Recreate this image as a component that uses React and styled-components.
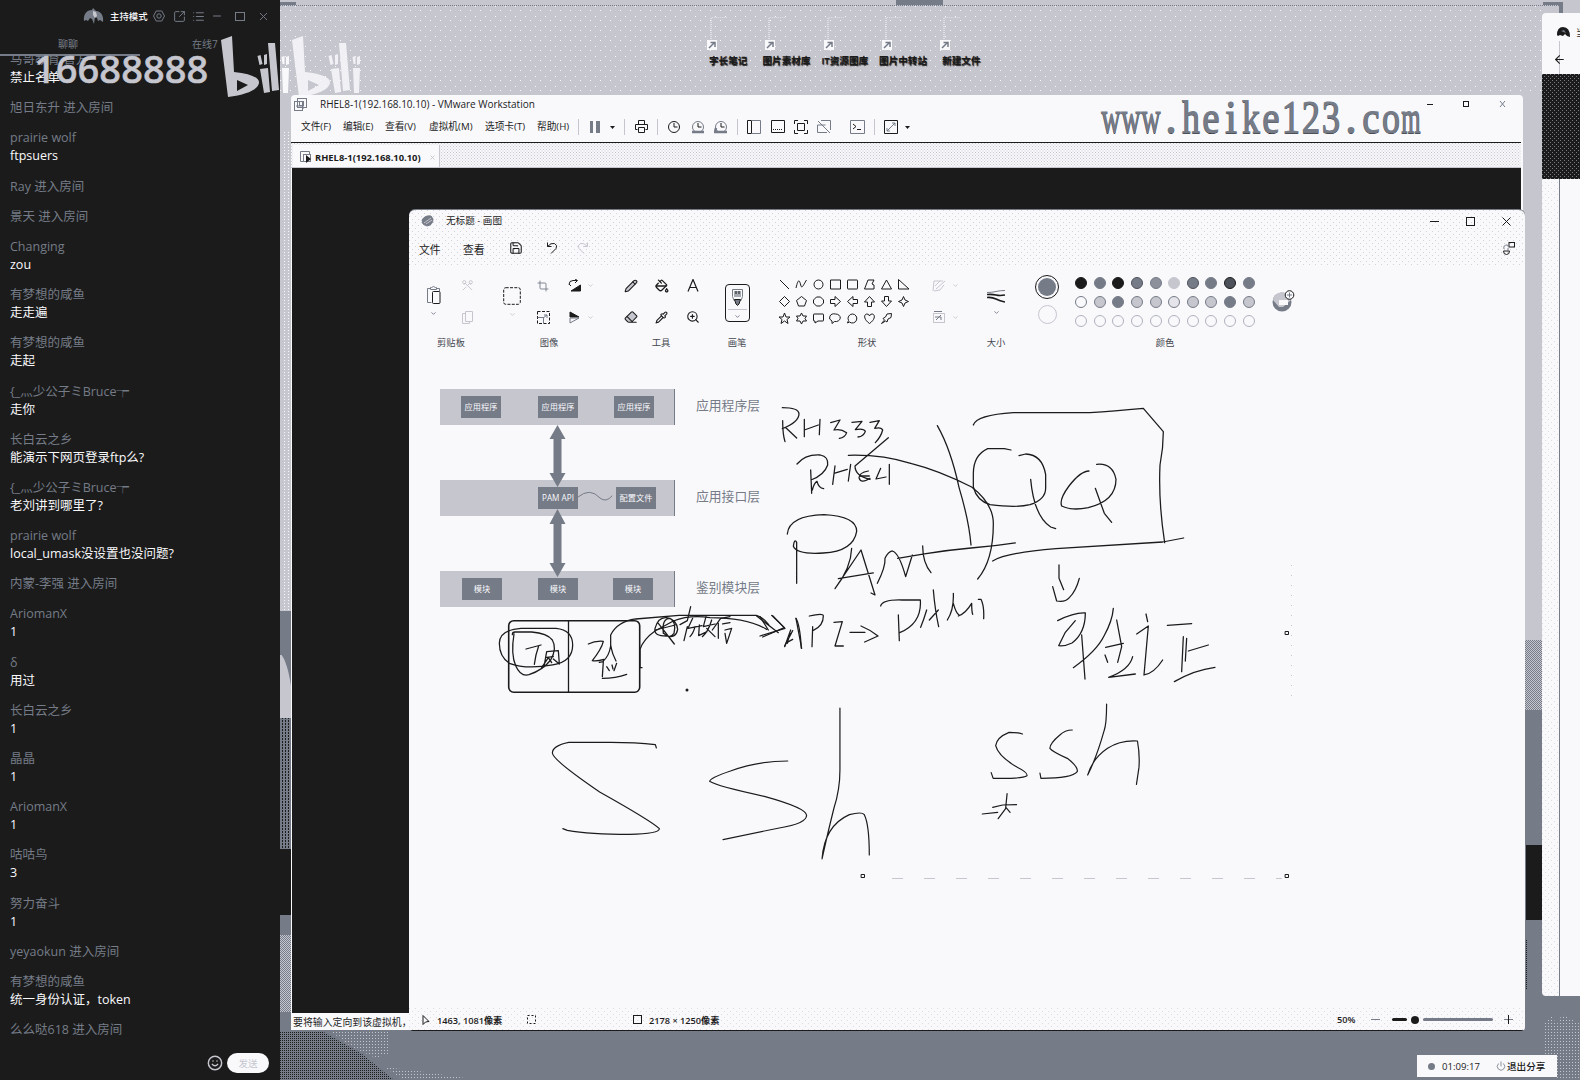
import React from "react";
import styled, { createGlobalStyle, css } from "styled-components";
import {
  Minus, X, Smile, Scissors, Copy, Clipboard, Pencil, PaintBucket, Eraser, Pipette, ZoomIn,
  Crop, Save, Undo2, Redo2, Printer, ArrowLeft, Power, SquareArrowOutUpRight, List, ChevronDown,
} from "lucide-react";

const C = { ink: "#1b1b1b", mid: "#757b87", light: "#c6c6cf", paper: "#f9f9fc" };

const dots = (color, size) => css`
  background-image: conic-gradient(from 270deg at 1px 1px, ${color} 90deg, transparent 0),
    conic-gradient(from 270deg at 1px 1px, ${color} 90deg, transparent 0);
  background-size: ${size}px ${size}px;
  background-position: 0 0, ${size / 2}px ${size / 2}px;
`;

const Global = createGlobalStyle`
  * { box-sizing: border-box; }
  body { margin: 0; background: ${C.light}; overflow: hidden; }
  svg { display: block; flex: none; }
`;

const Desktop = styled.main`
  position: relative;
  width: 1580px;
  height: 1080px;
  overflow: hidden;
  background: ${C.light};
  color: ${C.ink};
  font-family: "Open Sans", "Noto Sans CJK SC", sans-serif;
`;

const Layer = styled.svg`
  position: absolute;
  left: 0;
  top: 0;
  pointer-events: none;
`;

/* ---------- chat sidebar ---------- */
const Sidebar = styled.aside`
  position: absolute;
  left: 0;
  top: 0;
  width: 280px;
  height: 1080px;
  background: ${C.ink};
  display: flex;
  flex-direction: column;
`;
const SideHeader = styled.header`
  height: 32px;
  padding-left: 83px;
  display: flex;
  align-items: center;
  color: ${C.mid};
`;
const Mode = styled.span`
  width: 49px;
  margin-left: 6px;
  padding-bottom: 1px;
  font-size: 9.4px;
  font-weight: 500;
  color: ${C.paper};
  white-space: nowrap;
`;
const HeadIcon = styled.span`
  width: ${(p) => p.$w}px;
  display: flex;
  justify-content: center;
`;
const Tabs = styled.nav`
  display: flex;
  height: 24px;
  flex: none;
`;
const Tab = styled.span`
  width: 140px;
  padding-left: ${(p) => (p.$on ? 0 : 52)}px;
  padding-right: ${(p) => (p.$on ? 4 : 0)}px;
  text-align: ${(p) => (p.$on ? "center" : "left")};
  font-size: 10px;
  line-height: 24px;
  color: ${C.mid};
  border-bottom: 2px solid ${(p) => (p.$on ? C.mid : "transparent")};
`;
const Chat = styled.section`
  flex: 1;
  overflow: hidden;
  padding-left: 10px;
`;
const ChatInner = styled.div`
  margin-top: -5px;
`;
const Message = styled.div`
  margin-bottom: 12.2px;
  font-size: 12.5px;
  line-height: 18px;
  white-space: nowrap;
`;
const Name = styled.div`
  height: 18px;
  color: ${C.mid};
`;
const Said = styled.div`
  height: 18px;
  color: ${C.paper};
`;
const SideFooter = styled.footer`
  height: 34px;
  padding: 0 11px 0 0;
  display: flex;
  align-items: center;
  justify-content: flex-end;
  gap: 4px;
  color: ${C.light};
`;
const Send = styled.button`
  width: 42px;
  height: 20px;
  padding: 0;
  border: 0;
  border-radius: 10px;
  background: ${C.paper};
  color: ${C.light};
  font: 9.5px "Noto Sans CJK SC", sans-serif;
`;

const messages = [
  ["马哥教育 官方", "禁止名单"],
  ["旭日东升 进入房间"],
  ["prairie wolf", "ftpsuers"],
  ["Ray 进入房间"],
  ["景天 进入房间"],
  ["Changing", "zou"],
  ["有梦想的咸鱼", "走走遍"],
  ["有梦想的咸鱼", "走起"],
  ["{_灬少公子ミBruce┮", "走你"],
  ["长白云之乡", "能演示下网页登录ftp么?"],
  ["{_灬少公子ミBruce┮", "老刘讲到哪里了?"],
  ["prairie wolf", "local_umask没设置也没问题?"],
  ["内蒙-李强 进入房间"],
  ["AriomanX", "1"],
  ["δ", "用过"],
  ["长白云之乡", "1"],
  ["晶晶", "1"],
  ["AriomanX", "1"],
  ["咕咕鸟", "3"],
  ["努力奋斗", "1"],
  ["yeyaokun 进入房间"],
  ["有梦想的咸鱼", "统一身份认证，token"],
  ["么么哒618 进入房间"],
];

const ChatPanel = () => (
  <Sidebar>
    <SideHeader>
      <svg width="21" height="18" viewBox="0 0 21 18" fill={C.mid}>
        <path d="M1 14C0 6 5 3 9 3l1-2 3 3c5 0 8 5 7 11l-3-2-2 1-1-3-2-1-1 7-2-5-2-1-2 3-2-1z" />
        <path d="M10 4l3 1 1 4-2 2-2-3z" fill={C.light} />
      </svg>
      <Mode>主持模式</Mode>
      <HeadIcon $w={2}>
        <svg width="12" height="12" viewBox="0 0 12 12" fill="none" stroke="currentColor"><path d="M3.2 1h5.6L11.5 6 8.8 11H3.2L.5 6z" /><circle cx="6" cy="6" r="2.2" /></svg>
      </HeadIcon>
      <HeadIcon $w={38}><SquareArrowOutUpRight size={13} strokeWidth={1.8} /></HeadIcon>
      <HeadIcon $w={2}><List size={13} strokeWidth={2} /></HeadIcon>
      <HeadIcon $w={34}><Minus size={12} strokeWidth={2} /></HeadIcon>
      <HeadIcon $w={13}><svg width="10" height="9"><rect x=".5" y=".5" width="9" height="8" fill="none" stroke={C.mid} /></svg></HeadIcon>
      <HeadIcon $w={34}><X size={13} strokeWidth={1.8} /></HeadIcon>
    </SideHeader>
    <Tabs>
      <Tab $on>聊聊</Tab>
      <Tab>在线7</Tab>
    </Tabs>
    <Chat>
      <ChatInner>
        {messages.map(([name, said], i) => (
          <Message key={i}>
            <Name>{name}</Name>
            {said && <Said>{said}</Said>}
          </Message>
        ))}
      </ChatInner>
    </Chat>
    <SideFooter>
      <Smile size={16} strokeWidth={2.2} />
      <Send>发送</Send>
    </SideFooter>
  </Sidebar>
);

/* ---------- wallpaper ---------- */
const Wallpaper = () => (
  <Layer width="1580" height="1080">
    <defs>
      <pattern id="fine" width="2" height="2" patternUnits="userSpaceOnUse"><rect width="1" height="1" fill={C.ink} /></pattern>
      <pattern id="half" width="2" height="2" patternUnits="userSpaceOnUse"><rect width="1" height="1" fill={C.mid} /><rect x="1" y="1" width="1" height="1" fill={C.mid} /></pattern>
      <pattern id="bright" width="3" height="3" patternUnits="userSpaceOnUse"><rect width="1" height="1" fill={C.light} /></pattern>
      <pattern id="snow" width="10" height="10" patternUnits="userSpaceOnUse"><rect width="1" height="1" fill={C.paper} /><rect x="5" y="6" width="1" height="1" fill={C.paper} /></pattern>
      <pattern id="flurry" width="4" height="3" patternUnits="userSpaceOnUse"><rect width="1" height="1" fill={C.paper} /></pattern>
      <pattern id="lines" width="3" height="3" patternUnits="userSpaceOnUse"><rect width="1" height="2" fill={C.ink} /></pattern>
    </defs>
    <rect x="280" y="6" width="1262" height="89" fill="url(#snow)" />
    <rect x="282" y="130" width="10" height="480" fill="url(#flurry)" />
    <rect x="278" y="611" width="14" height="44" fill={C.mid} />
    <path d="M280 653q8 8 12 40V650z" fill={C.mid} />
    <rect x="278" y="718" width="14" height="132" fill={C.mid} />
    <rect x="280" y="718" width="12" height="132" fill="url(#lines)" />
    <rect x="280" y="849" width="12" height="66" fill={C.ink} />
    <rect x="278" y="915" width="14" height="20" fill={C.mid} />
    <rect x="280" y="935" width="12" height="78" fill="url(#half)" />
    <rect x="278" y="1012" width="1302" height="68" fill={C.mid} />
    <path d="M280 1031h42l40 23 32 26H280z" fill="url(#fine)" />
    <path d="M330 1031h60v22l-14 5-24-11zM384 1067l34 4 60 9h-74z" fill="url(#bright)" />
    <rect x="1525" y="640" width="17" height="70" fill="url(#half)" />
    <rect x="1524" y="710" width="56" height="370" fill={C.mid} />
    <rect x="1526" y="845" width="16" height="75" fill={C.ink} />
    <rect x="1526" y="940" width="1" height="50" fill="url(#fine)" />
    <path d="M1545 1022l6-6 6 8 5-10 18 10v56h-23v-25h-13z" fill="url(#bright)" />
    <path d="M280 5.500H1560" stroke={C.mid} strokeDasharray="1 1" />
    <path d="M277 20V3q0-1 2-1h17v3h-16v16zM1543 2h20v20h-4V5h-16z" fill={C.mid} />
    <rect x="896" y="0" width="47" height="5" fill={C.mid} />
  </Layer>
);

const Shortcuts = styled.div`
  position: absolute;
  left: 699px;
  top: 17px;
  display: flex;
`;
const Shortcut = styled.div`
  width: 58.3px;
  display: flex;
  flex-direction: column;
  align-items: center;
  font-size: 9.6px;
  line-height: 13px;
  white-space: nowrap;
  font-weight: 600;
  color: ${C.ink};
  text-shadow: 0.5px 0.5px 1px ${C.ink};
`;
const ShortcutIcon = styled.svg`
  width: 46px;
  height: 37px;
`;
const shortcuts = ["字长笔记", "图片素材库", "IT资源图库", "图片中转站", "新建文件"];

/* ---------- VMware window ---------- */
const VmWindow = styled.section`
  position: absolute;
  left: 291px;
  top: 95px;
  width: 1232px;
  height: 935px;
  background: ${C.paper};
  border-radius: 4px 4px 0 0;
  display: flex;
  flex-direction: column;
`;
const VmTitle = styled.header`
  height: 18px;
  flex: none;
  padding-left: 3px;
  display: flex;
  align-items: center;
  font-size: 10px;
  color: ${C.ink};
`;
const VmCaption = styled.span`
  margin-left: 13px;
  flex: 1;
  line-height: 16px;
  letter-spacing: -0.02px;
  white-space: nowrap;
`;
const Controls = styled.div`
  display: flex;
  gap: ${(p) => p.$gap}px;
  padding-right: ${(p) => p.$right}px;
  align-items: center;
`;
const VmTools = styled.div`
  height: 30px;
  flex: none;
  padding: 0 0 1px 10px;
  display: flex;
  align-items: center;
  border-bottom: 1px solid ${C.ink};
  margin-right: 2px;
`;
const MenuItem = styled.span`
  width: ${(p) => p.$w}px;
  padding-bottom: 1px;
  font-size: 9.7px;
  line-height: 14px;
  white-space: nowrap;
`;
const Slot = styled.span`
  width: ${(p) => p.$w}px;
  display: flex;
  justify-content: center;
  flex: none;
  color: ${(p) => p.$c || C.ink};
`;
const Rule = styled.i`
  width: 1px;
  height: 16px;
  background: ${C.light};
`;
const TabStrip = styled.div`
  height: 25px;
  flex: none;
  margin-right: 2px;
  padding: 2px 0 0 2px;
  background-color: ${C.paper};
  ${dots(C.light, 3)}
  border-bottom: 1px solid ${C.light};
`;
const VmTab = styled.div`
  width: 147px;
  height: 22px;
  padding: 2px 0 0 7px;
  display: flex;
  align-items: center;
  gap: 4px;
  background: ${C.paper};
  border-right: 1px solid ${C.light};
  font-size: 9.4px;
  font-weight: 700;
  white-space: nowrap;
  color: ${C.ink};
`;
const TabClose = styled.span`
  margin-left: 4px;
  color: ${C.light};
`;
const Guest = styled.div`
  flex: 1;
  margin: 0 2px 0 1px;
  background: ${C.ink};
`;
const VmStatus = styled.footer`
  height: 17px;
  flex: none;
  padding: 1px 0 0 2px;
  font-size: 9.9px;
  line-height: 16px;
  white-space: nowrap;
`;

const Ic = ({ w = 14, h = 14, children, sw = 1 }) => (
  <svg width={w} height={h} viewBox={`0 0 ${w} ${h}`} fill="none" stroke="currentColor" strokeWidth={sw}>{children}</svg>
);
const Sep = ({ w }) => <Slot $w={w}><Rule /></Slot>;
const Caret = () => <svg width="5" height="3"><path d="M0 0h5L2.500 3z" fill={C.ink} /></svg>;
const ClockIc = ({ tail }) => (
  <Ic><circle cx="7" cy="7" r="5.500" stroke={tail ? C.mid : C.ink} /><path d="M7 3v4h3.500" />{tail && <path d={tail} strokeWidth="2.500" stroke={C.mid} />}</Ic>
);

const menus = [["文件(F)", 42], ["编辑(E)", 42], ["查看(V)", 44], ["虚拟机(M)", 56], ["选项卡(T)", 52], ["帮助(H)", 36]];

const Vmware = () => (
  <VmWindow>
    <VmTitle>
      <Ic w={13} h={13}><g stroke={C.mid}><rect x=".5" y="3.500" width="8" height="9" /><rect x="3.500" y=".5" width="9" height="9" /><rect x="5.500" y="3.500" width="4" height="4" /><path d="M2 8h7v3" /></g></Ic>
      <VmCaption>RHEL8-1(192.168.10.10) - VMware Workstation</VmCaption>
      <Controls $gap={30} $right={17}>
        <Ic w={6} h={6}><path d="M0 3.500h6" /></Ic>
        <Ic w={6} h={6}><rect x=".5" y=".5" width="5" height="5" /></Ic>
        <Ic w={7} h={6}><path d="M1 0l5 6M6 0L1 6" stroke={C.mid} /></Ic>
      </Controls>
    </VmTitle>
    <VmTools>
      {menus.map(([t, w]) => <MenuItem key={t} $w={w}>{t}</MenuItem>)}
      <Sep w={10} />
      <Slot $w={24}><svg width="10" height="12" fill={C.mid}><rect width="3" height="12" /><rect x="6" width="4" height="12" /></svg></Slot>
      <Slot $w={10}><Caret /></Slot>
      <Sep w={14} />
      <Slot $w={21}><Ic w={13}><path d="M3.500 4.500v-4h6v4M.5 9.500v-5h12v5h-2M.5 9.500h2M3.500 7.500h6v5h-6z" /></Ic></Slot>
      <Sep w={10} />
      <Slot $w={24}><ClockIc /></Slot>
      <Slot $w={24}><ClockIc tail="M1 12h12" /></Slot>
      <Slot $w={22}><ClockIc tail="M2 8l-1 4h12" /></Slot>
      <Sep w={10} />
      <Slot $w={24}><Ic><path d="M.5.5h4v13h-4z" /><path d="M4.500.5h9v13h-9" stroke={C.mid} /></Ic></Slot>
      <Slot $w={23}><Ic><path d="M.5.5h13v12H.5z" /><path d="M2 9.500h10" strokeDasharray="1 1" /></Ic></Slot>
      <Slot $w={23}><Ic><path d="M.5 4V.5H4M10 .5h3.500V4M13.500 10v3.500H10M4 13.500H.5V10M3.500 3.500h7v7h-7z" /></Ic></Slot>
      <Slot $w={24} $c={C.mid}><Ic><path d="M1 1l12 12M4 .5h9.500V10M10 12.500H.5V5h8" /></Ic></Slot>
      <Slot $w={10} />
      <Slot $w={22}><Ic w={15}><path d="M.5.5h14v13H.5z" stroke={C.mid} /><path d="M3 4l3 2.500L3 9M7 9.500h4" /></Ic></Slot>
      <Sep w={12} />
      <Slot $w={22}><Ic><path d="M.5.5h13v13H.5z" /><path d="M3 11l8-8M8 3h3v3M3 8v3h3" stroke={C.mid} /></Ic></Slot>
      <Slot $w={10}><Caret /></Slot>
    </VmTools>
    <TabStrip>
      <VmTab>
        <Ic w={11} h={12}><path d="M4 10.500H.5V.5h9V4" stroke={C.mid} /><rect x="3.500" y="3.500" width="7" height="7" stroke={C.mid} /><path d="M6 4l5 4-5 4z" fill={C.ink} stroke="none" /></Ic>
        <span>RHEL8-1(192.168.10.10)</span>
        <TabClose><X size={7} strokeWidth={3} /></TabClose>
      </VmTab>
    </TabStrip>
    <Guest />
    <VmStatus>要将输入定向到该虚拟机，请</VmStatus>
  </VmWindow>
);

/* ---------- paint window ---------- */
const PaintWindow = styled.section`
  position: absolute;
  left: 409px;
  top: 210px;
  width: 1116px;
  height: 821px;
  background: ${C.paper};
  border-radius: 6px 6px 4px 4px;
  box-shadow: 0 -1px 0 ${C.mid};
  display: flex;
  flex-direction: column;
  overflow: hidden;
`;
const PaintHead = styled.header`
  height: 57px;
  flex: none;
  ${dots("#d2d2da", 6)}
`;
const PaintTitle = styled.div`
  height: 22px;
  padding-left: 12px;
  display: flex;
  align-items: center;
  font-size: 9.6px;
`;
const PaintCaption = styled.span`
  flex: 1;
  margin-left: 12px;
  padding-bottom: 2px;
`;
const PaintMenu = styled.div`
  height: 33px;
  padding: 0 10px 1px 10px;
  display: flex;
  align-items: center;
  font-size: 10.8px;
`;
const MenuWord = styled.span`
  width: 44px;
  padding-top: 1px;
`;
const Grow = styled.span`
  flex: 1;
`;
const Ribbon = styled.div`
  height: 88px;
  flex: none;
  padding-top: 3px;
  display: flex;
`;
const Group = styled.div`
  width: ${(p) => p.$w}px;
  display: flex;
  flex-direction: column;
`;
const GroupBody = styled.div`
  height: 64px;
  display: flex;
  padding-left: ${(p) => p.$pad || 0}px;
`;
const GroupLabel = styled.div`
  height: 18px;
  font-size: 9.3px;
  line-height: 18px;
  text-align: center;
  color: #43464e;
`;
const Column = styled.div`
  width: ${(p) => p.$w}px;
  margin-left: ${(p) => p.$ml || 0}px;
  color: ${(p) => p.$c || C.ink};
  display: flex;
  flex-direction: column;
  flex: none;
`;
const Cell = styled.div`
  height: 31.5px;
  display: flex;
  align-items: center;
  justify-content: center;
`;
const Tall = styled.div`
  height: 64px;
  padding-top: ${(p) => p.$pt || 16}px;
  display: flex;
  flex-direction: column;
  align-items: center;
  gap: 6px;
`;
const BrushButton = styled.div`
  width: 25px;
  height: 38px;
  margin: 14px auto 0;
  padding-top: 4px;
  border: 1px solid ${C.ink};
  border-radius: 4px;
  display: flex;
  flex-direction: column;
  align-items: center;
`;
const BrushMore = styled.div`
  width: 19px;
  margin-top: 2px;
  padding-top: 3px;
  border-top: 1px solid ${C.light};
  display: flex;
  justify-content: center;
`;
const ShapeGrid = styled.div`
  display: grid;
  grid-template-columns: repeat(8, 17.07px);
  grid-auto-rows: 16.8px;
  place-items: center;
  padding-top: 6.600px;
  height: 58px;
`;
const Swatches = styled.div`
  display: grid;
  grid-template-columns: repeat(10, 18.65px);
  grid-auto-rows: 18.6px;
  place-items: center;
  padding-top: 4.200px;
  margin-left: 11.700px;
`;
const Swatch = styled.i`
  width: 12px;
  height: 12px;
  border-radius: 50%;
  background: ${(p) => p.$fill};
  border: 1px solid ${(p) => p.$edge};
`;
const Current = styled.i`
  width: ${(p) => p.$d}px;
  height: ${(p) => p.$d}px;
  border-radius: 50%;
  border: 1px solid ${(p) => p.$edge};
  background: ${(p) => p.$fill};
  background-clip: content-box;
  padding: ${(p) => p.$pad || 0}px;
`;
const Canvas = styled.div`
  position: relative;
  flex: 1;
`;
const PaintStatus = styled.footer`
  height: 23px;
  flex: none;
  padding: 1px 12px 0 13px;
  display: flex;
  align-items: center;
  font-size: 9.2px;
  font-weight: 600;
  white-space: nowrap;
  ${dots("#dcdce3", 6)}
  border-bottom: 1px solid ${C.ink};
`;
const StatusPart = styled.span`
  width: ${(p) => p.$w}px;
  display: flex;
  align-items: center;
  justify-content: ${(p) => (p.$end ? "flex-end" : "flex-start")};
  gap: 7px;
  flex: none;
`;
const Track = styled.i`
  width: ${(p) => p.$w}px;
  height: 3px;
  border-radius: 2px;
  background: ${(p) => p.$c};
`;
const Knob = styled.i`
  width: 8px;
  height: 8px;
  margin: 0 4px;
  border-radius: 50%;
  background: ${C.ink};
`;

const Down = ({ c = C.mid }) => <ChevronDown size={7} strokeWidth={3} color={c} />;

const shapePaths = [
  "M2 2l9 9", "M1 10C4-3 5 5 6 8S9 6 11.500 2", "M6.500 2a4.500 4.500 0 100 9 4.500 4.500 0 000-9z", "M1.500 2h10v9h-10z", "M1.500 2.500q0-.5.5-.5h9q.5 0 .5.5v8q0 .5-.5.5h-9q-.5 0-.5-.5z", "M5 2h6L9 6l2 1v4H1.500z", "M6.500 2l5 9h-10z", "M1.500 1.500v9.500H12z",
  "M6.500 1.500l5 5-5 5-5-5z", "M6.500 1.500l5 4-2 5.500h-6l-2-5.500z", "M4.500 2h4l3 3v3l-3 3h-4l-3-3V5z", "M1.500 4.500H6v-3l5.500 5-5.500 5v-3H1.500z", "M11.500 4.500H7v-3l-5.500 5 5.500 5v-3h4.500z", "M4.500 11.500V7h-3l5-5.500 5 5.500h-3v4.500z", "M4.500 1.500V6h-3l5 5.500 5-5.500h-3V1.500z", "M6.500 1.500L8 5l3.500 1.500L8 8l-1.500 3.500L5 8 1.500 6.500 5 5z",
  "M6.500 1l1.500 4h4L9 7.500l1 4L6.500 9 3 11.500l1-4L1 5h4z", "M6.500 1L8 4h3.500L10 6.500l1.500 2.500H8L6.500 12 5 9H1.500l1.500-2.500L1.500 4H5z", "M2 2h9q.5 0 .5.500v6q0 .5-.5.500H6l-3 2V9H2q-.5 0-.5-.5v-6Q1.500 2 2 2z", "M6.500 2a4.700 3.800 0 11-1 7.500L3 11.500V9A4.700 3.800 0 016.500 2z", "M6.500 2a4.500 4.500 0 11-3 8l-2 1 1-2.500A4.500 4.500 0 016.500 2z", "M6.500 11.500C0 7 1 2 4 2q2 0 2.500 2Q7 2 9 2c3 0 4 5-2.500 9.500z", "M11.500 1.500L7 2 5.500 5 3 6.500 4.500 8l-3 3.500L5.500 9 7 10l1-3 3-1.500z",
];
const M = C.mid, L = C.light, K = C.ink, P = C.paper;
const swatches = [
  [K, K], [M, M], [K, K], [M, "#4d515a"], ["#8b909b", M], [L, L], [M, "#4d515a"], [M, M], ["#4d515a", K], [M, M],
  [P, M], [L, M], [M, M], [L, M], [L, M], ["#e4e4ea", M], [L, M], [L, M], [M, M], [L, M],
  ...Array(10).fill([P, "#b0b2bd"]),
];

const RibbonBar = () => (
  <Ribbon>
    <Group $w={84}>
      <GroupBody>
        <Column $w={48}><Tall><Ic w={15} h={18}><path d="M4 2.500H1.500v14h4M11 2.500h2.500V5M4.500 3.500v-2h1Q7.500-.5 9.500 1.500h1v2z" stroke={M} /><rect x="6.500" y="5.500" width="7.500" height="12" rx="1" /></Ic><Down /></Tall></Column>
        <Column $w={21} $c={C.light}><Cell><Scissors size={13} strokeWidth={1.8} transform="rotate(90)" /></Cell><Cell><Ic w={11} h={13}><path d="M3.500.5h7v10h-7zM3 2.500H.5v10h7V11" /></Ic></Cell></Column>
      </GroupBody>
      <GroupLabel>剪贴板</GroupLabel>
    </Group>
    <Group $w={112}>
      <GroupBody>
        <Column $w={38}><Tall $pt={17}><svg width="18" height="18"><rect x=".7" y=".7" width="16.600" height="16.600" rx="2" fill="none" stroke={K} strokeDasharray="3 1.300" /></svg><Down c={L} /></Tall></Column>
        <Column $w={24}><Cell><Crop size={12} strokeWidth={1.8} color={M} /></Cell><Cell><Ic w={13} h={13}><rect x=".5" y=".5" width="12" height="12" strokeDasharray="3 1.500" /><path d="M.5 6.500h6v6M7 4h3v3M6 7l4-3" stroke={M} /></Ic></Cell></Column>
        <Column $w={28} $ml={5}>
          <Cell><Ic w={13} h={13}><path d="M1 5.500q0-4 4-4h4M7 0l2.500 1.500L7 4M1 5l2 2" /><path d="M12.500 6v6H3z" fill="currentColor" /></Ic></Cell>
          <Cell><Ic w={13} h={13}><path d="M2 1l9 5H2z" fill="currentColor" /><path d="M2 7h9l-9 5z" stroke={M} /></Ic></Cell>
        </Column>
        <Column $w={5}><Cell><Down c={L} /></Cell><Cell><Down c={L} /></Cell></Column>
      </GroupBody>
      <GroupLabel>图像</GroupLabel>
    </Group>
    <Group $w={112}>
      <GroupBody $pad={10}>
        <Column $w={31.3}><Cell><Pencil size={14} strokeWidth={1.8} fill={L} /></Cell><Cell><Eraser size={14} strokeWidth={1.8} fill={L} /></Cell></Column>
        <Column $w={31.3}><Cell><PaintBucket size={14} strokeWidth={2.2} /></Cell><Cell><Pipette size={13} strokeWidth={2} /></Cell></Column>
        <Column $w={31.3}><Cell><Ic w={12} h={13} sw={1.2}><path d="M1 12.500L6 .5l5 12M3 8.500h6" /></Ic></Cell><Cell><ZoomIn size={14} strokeWidth={1.9} /></Cell></Column>
      </GroupBody>
      <GroupLabel>工具</GroupLabel>
    </Group>
    <Group $w={40}>
      <GroupBody>
        <BrushButton>
          <svg width="11" height="18" fill="none" stroke={M}><path d="M.5.500h10v7l-1.500 4h-7L.5 7.500z" /><path d="M2 2h7v6H2z" fill="#a5a9b2" stroke="none" /><path d="M4 2v3M7 2v3" stroke={K} /><path d="M2.500 10.500h6L7 15l-1.500 1.500L4 15z" fill={M} stroke={K} /></svg>
          <BrushMore><Down /></BrushMore>
        </BrushButton>
      </GroupBody>
      <GroupLabel>画笔</GroupLabel>
    </Group>
    <Group $w={220}>
      <GroupBody $pad={18.5}>
        <ShapeGrid>{shapePaths.map((d, i) => <Ic key={i} w={13} h={13}><path d={d} /></Ic>)}</ShapeGrid>
        <Column $w={26} $ml={14} $c={C.light}>
          <Cell><Ic><path d="M1 12L2 2h9M4 10l9-8M2 12l6-1 4-5M3 7l5-5" /></Ic></Cell>
          <Cell><Ic><rect x="1.500" y="3.500" width="11" height="9" /><path d="M2 1.500h8M4 10l5-5M3 7h6v3" stroke={M} /></Ic></Cell>
        </Column>
        <Column $w={6}><Cell><Down c={L} /></Cell><Cell><Down c={L} /></Cell></Column>
      </GroupBody>
      <GroupLabel>形状</GroupLabel>
    </Group>
    <Group $w={38}>
      <GroupBody>
        <Column $w={38}><Tall $pt={19}><svg width="18" height="14" fill="none" stroke={K}><path d="M0 3.500q5 0 9-1t9-1" stroke={M} /><path d="M0 5.500q5-.5 9 .5t9 0M0 8.500q5-.5 9 1.500t9 3" strokeWidth="1.700" /></svg><Down /></Tall></Column>
      </GroupBody>
      <GroupLabel>大小</GroupLabel>
    </Group>
    <Group $w={300}>
      <GroupBody $pad={19}>
        <Column $w={26}><Tall $pt={5}><Current $d={24} $edge={K} $fill={M} $pad={2} /><Current $d={19} $edge={L} $fill="transparent" /></Tall></Column>
        <Swatches>{swatches.map(([f, e], i) => <Swatch key={i} $fill={f} $edge={e} />)}</Swatches>
        <Column $w={26} $ml={12}>
          <Tall $pt={20}>
            <svg width="24" height="23"><circle cx="11" cy="12" r="9.500" fill={M} /><path d="M2 10q1-7 9-8 7 1 9 8l-8 7H8z" fill={L} /><path d="M8 10h9v5H8z" fill={P} /><circle cx="18.500" cy="5" r="4.300" fill={P} stroke={K} /><path d="M16 5h5M18.500 2.500v5" stroke={M} /></svg>
          </Tall>
        </Column>
      </GroupBody>
      <GroupLabel>颜色</GroupLabel>
    </Group>
  </Ribbon>
);

/* Layer diagram pasted on the canvas */
const Band = styled.div`
  position: absolute;
  left: 31px;
  top: ${(p) => p.$y}px;
  width: 235px;
  height: 36px;
  background: ${C.light};
  border-right: 1px solid ${C.mid};
`;
const Box = styled.div`
  position: absolute;
  left: ${(p) => p.$x}px;
  top: 7px;
  width: 40px;
  height: 22px;
  background: ${C.mid};
  color: ${C.paper};
  font-size: 8.2px;
  line-height: 21px;
  text-align: center;
  white-space: nowrap;
`;
const BandLabel = styled.div`
  position: absolute;
  left: 287px;
  top: ${(p) => p.$y}px;
  font-size: 12.8px;
  line-height: 20px;
  color: ${C.mid};
  white-space: nowrap;
`;
const bands = [
  { y: 34, label: "应用程序层", boxes: [[21, "应用程序"], [98, "应用程序"], [174, "应用程序"]] },
  { y: 125, label: "应用接口层", boxes: [[98, "PAM API"], [176, "配置文件"]] },
  { y: 216, label: "鉴别模块层", boxes: [[22, "模块"], [98, "模块"], [173, "模块"]] },
];

const noteLeft = [
  "M268 820q0-40 65-45h105q50 5 50 50 0 50-60 60-80 14-130-5-30-20-30-60z",
  "M312 792q-10 60 5 95 15 34 40 27 42-14 65-44 20-35 5-60-15-20-62-24h-50q-8 0-8 8",
  "M348 837l45-12M386 828q-10 28-13 55M402 890l8-45 35-3 3 40-18-15M410 862l20-2M395 893l20-30 10 15",
  "M535 822q20-10 45-8-5 22-33 58 15 2 35-4 M602 828q-5 30-22 45M602 828q5 25 16 45M568 877l12-2-3 45M590 890l8 12M620 880l-8 22M577 925q40 0 73-12M606 885l3 12",
  "M602 835v-40q20-40 75-48l130-11h232q20 5 37 28M690 838q10-30 45-55l55-30q50-20 110-10 110 0 170 35M690 835v58l6 0",
  "M735 775q10-35 35-32 30 5 33 35-5 28-33 20-40 0-35-22zM760 790q-5-45 20-45 20 10 12 45-15 20-30 0M745 760l48 62M736 780l60-15",
  "M842 710l-10 42-22 12M832 770l-10 42M848 745l-14 30 42-8M855 770q-5 20-15 30M868 765l-2 32 25-12M888 740l-8 30 35-8M905 750q-10 35-28 50M890 775l25 25M932 745l-25 35M925 760v45M932 745l28-5M938 762l22-4M945 780l20-5-15 45-5-30",
  "M1085 736l38 37-65 28M1040 738l65 50M1124 828l24-46M1140 790l-8 30M1158 745l17 90",
];
const noteRight = [
  "M67 53q48 0 50 18 0 25-50 45M68 92q0 40 7 63M76 112l34 32M133 88v52M133 120l42-15M180 88l-2 46M212 98l28-8-18 30q20-5 38 8-5 15-22 17M276 97l30-3-20 25q25-5 30 5-5 15-22 17M330 97l28-5-14 23q20-5 24 5-5 20-22 38M385 143l-100 85q0 30 45 40",
  "M111 222q25-30 70-27 25 5 22 30-10 30-50 45M152 240l3 70M157 300q5-20 14-26 5 20 20 22M225 228l-7 55M222 250l40-12M272 223l-7 50M325 243q-28 5-28 20 5 20 33 2M300 258h28M362 235l-14 32 30-6M388 223v60",
  "M265 196q100-3 190 25 80 20 180 70 65 50 65 110 0 110-47 166M532 107q40 70 65 185 30 100 36 173",
  "M82 432q5-55 110-58 98 5 98 50-10 60-100 65-80 5-90-20 3-25 10-12v123M275 475q-2 60-50 121l78-116 42 135-12-6M235 566l105-17M352 580q25-50 23-75 10-20 22-22 20 5 40 77l20-65M488 468q0 50 25 80M413 505l80-13q70-12 140-18 70-5 133-15",
  "M640 105q10-30 120-37h230q70-5 160-13l60 70q0 50-10 100-5 110 14 233",
  "M753 180l-20-4h-50q-43 20-43 75v40q10 40 50 53 80 10 120 0 47-15 47-50v-40q-10-60-60-62l-20 5M812 268q10 110 60 143l15 5M987 243q-25 0-60 45-30 40-22 60 30 15 80 5 83-20 83-85-10-50-58-45M1006 295l27 75 22 27",
  "M698 513q40-25 190-37l320-20 63-12",
  "M897 525v40l14 34M878 590l12 43q25 5 38-10 20-20 30-58M893 692q50-25 83-23 0 60-40 90-20 10-40 8l20-40 30-35M965 735l10 132M940 833q70-50 92-95 25-45 28-83M1070 690l15 80-12 47M1037 772l53-12M1035 795l8 22M1118 800q-10 40-72 62l80-10M1158 672l5 23M1130 732l35-24-13 147q30-5 56-45M1222 706l73-5M1270 740l-5 105M1280 745l-4 68M1285 783l60-18M1243 875q60-35 122-43",
  "M0 680l25 40M0 738l75-23-37-38M74 770l18-50M98 748l-18 10M108 685q12 20 16 90M148 678q43-10 42 0 0 30-30 43M158 710l-2 60M222 697l25-2-22 73 25 0M270 727h45M303 708q25 10 51 30l-40 18M362 648q5-20 65-18h54q5 70-62 98M415 675l3 77M482 712q10-25 18-52M508 690l27-30M520 600q5 60 16 110M562 690q20-30 18-80 M580 640q8 30 18 36M595 678q22-8 40-38 0 25 3 33M655 628h8q10 20 8 58",
];
const noteBottom = [
  "M254 204l-2-10q-40-7-90-7H78q-33 10-33 32 0 20 95 117 105 88 120 110 0 15-60 17-80 0-125-12l-9-5",
  "M518 243q-60 0-115 30-40 20-42 31 15 15 110 45 85 35 85 57 0 25-55 38-60 18-113 35",
  "M623 84v185q0 60-12 115-15 90-24 153 5-100 55-133 25-10 30 0 10 30 10 121",
  "M990 162q-10-5-27-5-25 15-27 40 5 30 40 62 25 18 23 28-10 10-68 8l-4-17M1090 150q-15 0-25 15-20 25-20 40 5 10 35 30 22 25 20 40-10 20-73 20l-2-16M1159 72q0 60-5 80-15 80-33 133 10-50 40-80 25-25 60-22 5 40 3 80l-5 50",
  "M959 341l-3 45-15 30M930 382l20-7 28-1M909 402l31-5M957 383l8 14",
];
const Drawing = () => (
  <Layer width="1116" height="654" viewBox="409 355 1116 654" fill="none" stroke={C.ink} strokeLinecap="round" strokeLinejoin="round">
    <g fill={C.mid} stroke="none">
      <path d="M557.500 425l8 14h-4v34h4l-8 14-8-14h4v-34h-4zM557.500 509l8 15h-4v39h4l-8 14-8-14h4v-39h-4z" />
    </g>
    <path d="M578 497q12-10 22 1 6 5 12-2" stroke={C.mid} />
    <rect x="508.700" y="620.700" width="131" height="71.500" rx="5" strokeWidth="1.600" />
    <path d="M568.500 621v71" strokeWidth="1.300" />
    <g transform="translate(410 370) scale(.33333)" strokeWidth="3.800">{noteLeft.map((d, i) => <path key={i} d={d} />)}</g>
    <circle cx="687" cy="690" r="1.500" fill={C.ink} stroke="none" />
    <g transform="translate(760 390) scale(.33333)" strokeWidth="3.800">{noteRight.map((d, i) => <path key={i} d={d} />)}</g>
    <g transform="translate(530 680) scale(.4975 .33333)">{noteBottom.map((d, i) => <path key={i} d={d} vectorEffect="non-scaling-stroke" strokeWidth="1.200" />)}</g>
    <g stroke={C.ink} strokeWidth="1" fill={C.paper}>
      <rect x="861.500" y="874.500" width="3" height="3" /><rect x="1285.500" y="874.500" width="3" height="3" /><rect x="1285.500" y="631.500" width="3" height="3" />
    </g>
    <path d="M892 878.500h390" stroke={C.light} strokeDasharray="11 21" strokeLinecap="butt" />
    <path d="M1291.500 565v136" stroke={C.light} strokeDasharray="1 9" strokeLinecap="butt" />
  </Layer>
);

const Paint = () => (
  <PaintWindow>
    <PaintHead>
      <PaintTitle>
        <Ic w={13} h={12}><path d="M1 5q3-5 9-4l2 3q0 6-6 7L2 9z" fill={M} stroke={M} /><path d="M3 8l7-5M5 9l6-4" stroke={L} /></Ic>
        <PaintCaption>无标题 - 画图</PaintCaption>
        <Controls $gap={27} $right={14}>
          <Ic w={9} h={9}><path d="M0 4.500h9" /></Ic>
          <Ic w={9} h={9}><rect x=".5" y=".5" width="8" height="8" /></Ic>
          <Ic w={9} h={9}><path d="M.5.5l8 8M8.500.5l-8 8" /></Ic>
        </Controls>
      </PaintTitle>
      <PaintMenu>
        <MenuWord>文件</MenuWord>
        <MenuWord>查看</MenuWord>
        <Slot $w={17}><Save size={14} strokeWidth={1.8} /></Slot>
        <Slot $w={55}><Ic w={12} h={12}><path d="M1.500.5v4h4M1.500 4.500Q5 .5 8.500 1.500q3.500 2 1.500 5l-5 5" /></Ic></Slot>
        <Slot $w={8} $c={C.light}><Ic w={12} h={12}><path d="M10.500.5v4h-4M10.500 4.500Q7 .5 3.500 1.500q-3.500 2-1.500 5l5 5" /></Ic></Slot>
        <Grow />
        <Ic w={13} h={13}><rect x="7" y=".5" width="5.500" height="4.500" /><path d="M1.500 9h6q0 3.500-3 3.500t-3-3.500z" /><path d="M2 7q-1-4 3-4l2 1M6 9V6" stroke={M} /></Ic>
      </PaintMenu>
    </PaintHead>
    <RibbonBar />
    <Canvas>
      {bands.map((b) => (
        <React.Fragment key={b.y}>
          <Band $y={b.y}>{b.boxes.map(([x, t]) => <Box key={x} $x={x}>{t}</Box>)}</Band>
          <BandLabel $y={b.y + 6}>{b.label}</BandLabel>
        </React.Fragment>
      ))}
      <Drawing />
    </Canvas>
    <PaintStatus>
      <StatusPart $w={105}><Ic w={8} h={10}><path d="M1 .5l6 6-3.500.5L1 9.500z" /></Ic><span>1463, 1081像素</span></StatusPart>
      <StatusPart $w={106}><Ic w={9} h={9}><rect x=".5" y=".5" width="8" height="8" strokeDasharray="2 2" /></Ic></StatusPart>
      <StatusPart $w={90}><Ic w={9} h={9}><rect x=".5" y=".5" width="8" height="8" /></Ic><span>2178 × 1250像素</span></StatusPart>
      <Grow />
      <StatusPart $w={34}><span>50%</span></StatusPart>
      <StatusPart $w={21}><Ic w={9} h={9}><path d="M0 4.500h9" stroke={M} /></Ic></StatusPart>
      <Track $w={15} $c={C.ink} />
      <Knob />
      <Track $w={70} $c={C.mid} />
      <StatusPart $w={20} $end><Ic w={9} h={9}><path d="M0 4.500h9" stroke={M} /><path d="M4.500 0v9" /></Ic></StatusPart>
    </PaintStatus>
  </PaintWindow>
);

/* ---------- browser window at the right edge ---------- */
const EdgeWindow = styled.section`
  position: absolute;
  left: 1542px;
  top: 13px;
  width: 48px;
  height: 983px;
  background: ${C.paper};
  border-radius: 4px;
  display: flex;
  flex-direction: column;
  overflow: hidden;
`;
const EdgeHead = styled.div`
  height: 61px;
  padding: 12px 0 0 11px;
  display: flex;
  flex-direction: column;
  gap: 14px;
  background: linear-gradient(${C.light}, ${C.light}) 17px 28px / 1px 40px no-repeat;
`;
const EdgeTab = styled.div`
  height: 14px;
  display: flex;
  align-items: center;
  gap: 6px;
  padding-left: 4px;
  font-size: 9px;
`;
const EdgeDark = styled.div`
  height: 105px;
  background-color: ${C.ink};
  ${dots(C.mid, 4)}
`;
const EdgePage = styled.div`
  flex: 1;
  width: 18px;
  border-right: 1px solid ${C.mid};
  ${dots("#dcdce3", 6)}
`;

const ShareBar = styled.div`
  position: absolute;
  left: 1417px;
  top: 1055px;
  width: 140px;
  height: 22px;
  padding-left: 11px;
  background: ${C.paper};
  display: flex;
  align-items: center;
  font-size: 9.6px;
  font-weight: 500;
  white-space: nowrap;
`;
const RecDot = styled.i`
  width: 7px;
  height: 7px;
  margin-right: 7px;
  border-radius: 50%;
  background: ${C.mid};
`;
const Elapsed = styled.span`
  width: 54px;
`;
const Leave = styled.span`
  display: flex;
  align-items: center;
  gap: 1px;
`;

/* ---------- overlays ---------- */
const RoomNumber = styled.div`
  position: absolute;
  left: 34px;
  top: 46px;
  font: 500 38px/44px "Noto Sans", sans-serif;
  letter-spacing: 0.05px;
  color: ${C.light};
  -webkit-text-stroke: 0.6px ${C.light};
`;
const SiteMark = styled.div`
  position: absolute;
  left: 1101px;
  top: 92px;
  display: flex;
  font: 400 46px/52px "Liberation Serif", serif;
  color: ${C.mid};
  -webkit-text-stroke: 1.2px ${C.mid};
  text-shadow: 0 1px 0 ${C.ink};
`;
const SiteChar = styled.span`
  width: 20px;
  display: flex;
  justify-content: center;
  transform: scaleX(${(p) => p.$s});
`;
const squeeze = { w: 0.58, m: 0.54, h: 0.78, k: 0.78, e: 0.85, i: 0.95, o: 0.78, c: 0.85, ".": 1 };

const brandHead = "M221 40l11-4 2 36q26 3 25 11-2 10-31 14zM237 80v11l11-6z";
const brandTail = "M257.500 56l3-1 2 9-3 1zM264 55l3-1v10l-3 1zM260 69l8-1 2 24-6 1zM268 43h7l4 47-7 1z";
const brandLast = "M281.500 57l3-1v8h-2zM286 57l3-1v8l-3 1zM282 68h7l-1 25h-5z";
const Brand = () => (
  <Layer width="380" height="110" fillRule="evenodd">
    <g fill={C.light}><path d={brandHead} /><path d={brandTail} /></g>
    <path d={brandLast} fill={C.paper} />
    <g fill={C.paper} opacity=".85" transform="translate(71 0)"><path d={brandHead} /><path d={brandTail} /><path d={brandLast} /></g>
  </Layer>
);

export default function App() {
  return (
    <Desktop>
      <Global />
      <Wallpaper />
      <Shortcuts>
        {shortcuts.map((s) => (
          <Shortcut key={s}>
            <ShortcutIcon viewBox="0 0 46 37">
              <path d="M6 22V2q0-2 2-2h14" fill="none" stroke={P} strokeDasharray="1 1" />
              <rect x="2" y="23" width="10" height="10" fill={P} />
              <path d="M4 31l6-6M5.500 25.500H10V30" fill="none" stroke={M} strokeWidth="1.500" />
            </ShortcutIcon>
            {s}
          </Shortcut>
        ))}
      </Shortcuts>
      <Vmware />
      <Paint />
      <EdgeWindow>
        <EdgeHead>
          <EdgeTab>
            <svg width="13" height="11"><path d="M0 8Q0 0 6 0q7 0 7 10l-3-1-2-2-2 2-3-1-2 1z" fill={K} /><path d="M4 4l3-1 2 3z" fill={M} /></svg>
            当
          </EdgeTab>
          <ArrowLeft size={13} strokeWidth={2} />
        </EdgeHead>
        <EdgeDark />
        <EdgePage />
      </EdgeWindow>
      <ShareBar>
        <RecDot />
        <Elapsed>01:09:17</Elapsed>
        <Leave><Power size={10} strokeWidth={2} color={M} />退出分享</Leave>
      </ShareBar>
      <ChatPanel />
      <RoomNumber>16688888</RoomNumber>
      <Brand />
      <SiteMark>{"www.heike123.com".split("").map((c, i) => <SiteChar key={i} $s={squeeze[c] || 0.8}>{c}</SiteChar>)}</SiteMark>
    </Desktop>
  );
}
